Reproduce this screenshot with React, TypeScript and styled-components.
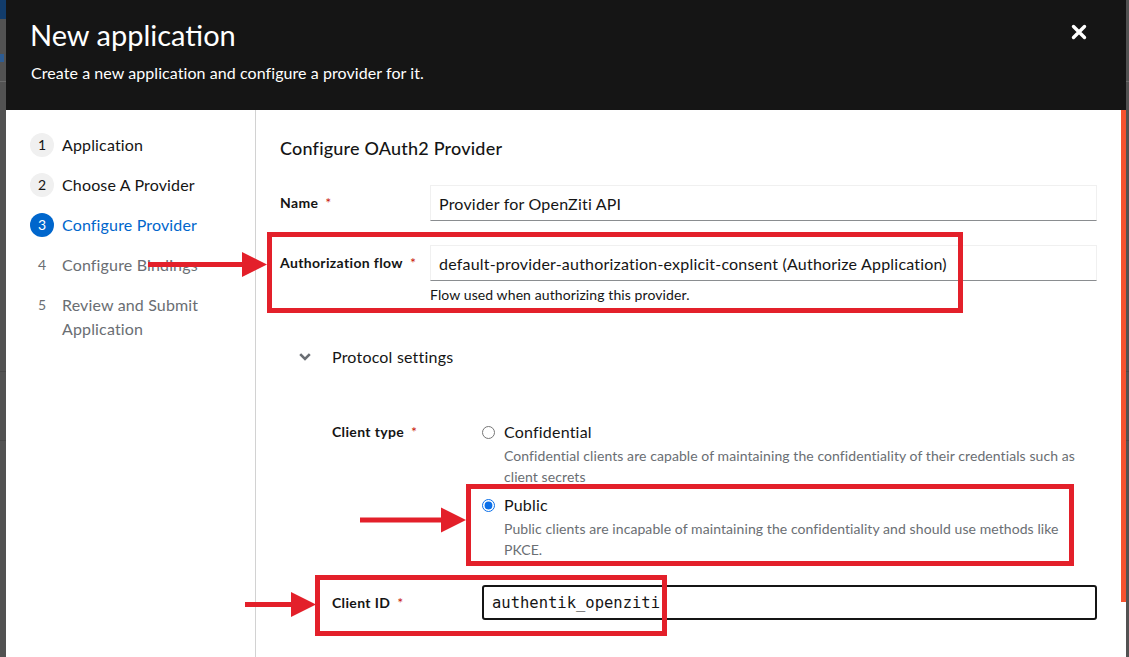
import React from "react";
import styled, { createGlobalStyle } from "styled-components";

const GlobalStyle = createGlobalStyle`
  html, body { margin: 0; padding: 0; overflow: hidden; background: #525252; }
  body { font-family: Lato, "Liberation Sans", sans-serif; color: #151515; }
  * { box-sizing: border-box; }
`;

const RED = "#e3202a";

const Page = styled.div`
  position: relative;
  width: 1129px;
  height: 657px;
  display: flex;
  overflow: hidden;
  background-color: #525252;
  background-image: linear-gradient(#6a6a6a, #6a6a6a), linear-gradient(#484848, #484848),
    linear-gradient(#484848, #484848);
  background-size: 100% 1px;
  background-position: 0 81px, 0 371px, 0 440px;
  background-repeat: no-repeat;
`;

const PeekLeft = styled.div`
  width: 6px;
  flex: none;
  display: flex;
  flex-direction: column;
`;

const PeekBanner = styled.div`
  height: 19px;
  background: #123c6b;
`;

const PeekMark = styled.div`
  margin-top: 35px;
  width: 4px;
  height: 8px;
  background: #2d5c93;
`;

const Modal = styled.div`
  position: relative;
  width: 1120px;
  flex: none;
  height: 100%;
  background: #ffffff;
  display: flex;
  flex-direction: column;
`;

const Header = styled.header`
  height: 110px;
  flex: none;
  background: #151515;
  padding: 17px 25px 0 25px;
  display: flex;
  justify-content: space-between;
  align-items: flex-start;
`;

const HeaderText = styled.div`
  display: flex;
  flex-direction: column;
  gap: 8px;
`;

const Title = styled.h1`
  margin: 0 0 0 -1px;
  font-size: 29px;
  line-height: 36px;
  font-weight: 400;
  color: #ffffff;
`;

const Subtitle = styled.p`
  margin: 0;
  font-size: 16px;
  line-height: 24px;
  letter-spacing: 0.07px;
  color: #ffffff;
`;

const CloseButton = styled.button`
  width: 44px;
  height: 44px;
  margin-top: -7px;
  border: none;
  background: transparent;
  padding: 0;
  display: flex;
  align-items: center;
  justify-content: center;
  cursor: pointer;
`;

const Body = styled.div`
  flex: 1;
  min-height: 0;
  display: flex;
`;

const Nav = styled.nav`
  width: 250px;
  flex: none;
  border-right: 1px solid #d2d2d2;
  padding: 23px 16px 0 24px;
`;

const NavList = styled.ol`
  list-style: none;
  margin: 0;
  padding: 0;
  display: flex;
  flex-direction: column;
  gap: 16px;
`;

type StepState = "done" | "current" | "todo";

const NavItem = styled.li<{ $state: StepState }>`
  display: flex;
  align-items: flex-start;
  gap: 8px;
  font-size: 16px;
  line-height: 24px;
  letter-spacing: 0.15px;
  color: ${(p) => (p.$state === "current" ? "#0066cc" : p.$state === "todo" ? "#6a6e73" : "#151515")};
`;

const StepNum = styled.span<{ $state: StepState }>`
  width: 24px;
  height: 24px;
  flex: none;
  border-radius: 50%;
  display: flex;
  align-items: center;
  justify-content: center;
  font-size: 14px;
  letter-spacing: 0;
  background: ${(p) => (p.$state === "current" ? "#0066cc" : p.$state === "done" ? "#f0f0f0" : "transparent")};
  color: ${(p) => (p.$state === "current" ? "#ffffff" : p.$state === "todo" ? "#6a6e73" : "#151515")};
`;

const Main = styled.main`
  flex: 1;
  min-width: 0;
  padding: 24px 29px 0 24px;
`;

const Heading = styled.h2`
  margin: 0 0 23px;
  font-size: 18px;
  line-height: 28px;
  font-weight: 500;
  letter-spacing: 0.2px;
`;

const Rows = styled.div`
  display: flex;
  flex-direction: column;
  gap: 24px;
`;

const FormRow = styled.div`
  display: grid;
  grid-template-columns: 150px 1fr;
  align-items: start;
`;

const Label = styled.label<{ $lh: number }>`
  font-size: 14px;
  font-weight: 700;
  letter-spacing: 0.35px;
  line-height: ${(p) => p.$lh}px;
  white-space: nowrap;
`;

const Req = styled.span`
  color: #c9190b;
  margin-left: 7px;
  font-weight: 400;
`;

const FieldCol = styled.div`
  display: flex;
  flex-direction: column;
`;

const TextField = styled.div<{ $focused?: boolean }>`
  display: flex;
  align-items: center;
  white-space: nowrap;
  overflow: hidden;
  color: #151515;
  ${(p) =>
    p.$focused
      ? `
    height: 35px;
    border: 2px solid #151515;
    border-radius: 3px;
    padding: 0 8px;
    font-family: "DejaVu Sans Mono", "Liberation Mono", monospace;
    font-size: 15.5px;
  `
      : `
    height: 36px;
    border: 1px solid #f0f0f0;
    border-bottom-color: #8a8d90;
    padding: 0 8px;
    font-size: 16px;
    letter-spacing: 0.2px;
  `}
`;

const Caret = styled.span`
  display: inline-block;
  width: 1px;
  height: 21px;
  margin-left: 2px;
  background: #151515;
`;

const Helper = styled.div`
  margin-top: 4px;
  font-size: 14px;
  line-height: 20px;
  letter-spacing: 0.1px;
`;

const Toggle = styled.button`
  margin-top: 32px;
  height: 40px;
  border: none;
  background: transparent;
  padding: 0 0 0 15px;
  display: flex;
  align-items: center;
  font-family: inherit;
  font-size: 16px;
  letter-spacing: 0.2px;
  color: #151515;
  cursor: pointer;
`;

const ToggleIcon = styled.span`
  width: 20px;
  display: flex;
  justify-content: center;
  align-items: center;
`;

const ToggleText = styled.span`
  margin-left: 17px;
  line-height: 24px;
`;

const Expanded = styled.div`
  margin-top: 43px;
  padding-left: 52px;
  display: flex;
  flex-direction: column;
  gap: 25px;
`;

const RadioGroup = styled.div`
  display: flex;
  flex-direction: column;
  gap: 6px;
`;

const RadioOption = styled.label`
  display: grid;
  grid-template-columns: 13px 1fr;
  column-gap: 9px;
  align-items: center;
`;

const Radio = styled.input`
  margin: 0;
  width: 13px;
  height: 13px;
  accent-color: #0b6fe8;
`;

const RadioLabel = styled.span`
  font-size: 16px;
  line-height: 24px;
  letter-spacing: 0.2px;
`;

const RadioDesc = styled.span`
  grid-column: 2;
  margin-top: 1px;
  padding-right: 12px;
  font-size: 14px;
  line-height: 21px;
  letter-spacing: 0.08px;
  color: #6a6e73;
`;

const Thumb = styled.div`
  position: absolute;
  right: 0;
  top: 110px;
  width: 5px;
  height: 492px;
  background: #f5512f;
`;

const PeekRight = styled.div`
  flex: 1;
`;

const AnnotationBox = styled.div<{ $x: number; $y: number; $w: number; $h: number }>`
  position: absolute;
  left: ${(p) => p.$x}px;
  top: ${(p) => p.$y}px;
  width: ${(p) => p.$w}px;
  height: ${(p) => p.$h}px;
  border: 5px solid ${RED};
  pointer-events: none;
`;

const ArrowLayer = styled.svg`
  position: absolute;
  left: 0;
  top: 0;
  width: 1129px;
  height: 657px;
  pointer-events: none;
`;

const Arrow = ({ x1, x2, y }: { x1: number; x2: number; y: number }) => (
  <g fill={RED}>
    <rect x={x1} y={y - 2.5} width={x2 - x1 - 22} height={5} />
    <polygon points={`${x2 - 25},${y - 12.5} ${x2},${y} ${x2 - 25},${y + 12.5}`} />
  </g>
);

const steps: { n: number; label: string; state: StepState }[] = [
  { n: 1, label: "Application", state: "done" },
  { n: 2, label: "Choose A Provider", state: "done" },
  { n: 3, label: "Configure Provider", state: "current" },
  { n: 4, label: "Configure Bindings", state: "todo" },
  { n: 5, label: "Review and Submit Application", state: "todo" },
];

export default function App() {
  return (
    <>
      <GlobalStyle />
      <Page>
        <PeekLeft>
          <PeekBanner />
          <PeekMark />
        </PeekLeft>
        <Modal>
          <Header>
            <HeaderText>
              <Title>New application</Title>
              <Subtitle>Create a new application and configure a provider for it.</Subtitle>
            </HeaderText>
            <CloseButton aria-label="Close">
              <svg width="16" height="16" viewBox="0 0 16 16">
                <path d="M2.5 2.5 L13.5 13.5 M13.5 2.5 L2.5 13.5" stroke="#fff" strokeWidth="3.4" strokeLinecap="round" />
              </svg>
            </CloseButton>
          </Header>
          <Body>
            <Nav>
              <NavList>
                {steps.map((s) => (
                  <NavItem key={s.n} $state={s.state}>
                    <StepNum $state={s.state}>{s.n}</StepNum>
                    <span>{s.label}</span>
                  </NavItem>
                ))}
              </NavList>
            </Nav>
            <Main>
              <Heading>Configure OAuth2 Provider</Heading>
              <Rows>
                <FormRow>
                  <Label $lh={36}>
                    Name<Req>*</Req>
                  </Label>
                  <TextField>Provider for OpenZiti API</TextField>
                </FormRow>
                <FormRow>
                  <Label $lh={36}>
                    Authorization flow<Req>*</Req>
                  </Label>
                  <FieldCol>
                    <TextField>default-provider-authorization-explicit-consent (Authorize Application)</TextField>
                    <Helper>Flow used when authorizing this provider.</Helper>
                  </FieldCol>
                </FormRow>
              </Rows>
              <Toggle>
                <ToggleIcon>
                  <svg width="12" height="8" viewBox="0 0 12 8">
                    <path d="M1.2 1.2 L6 6 L10.8 1.2" stroke="#6a6e73" strokeWidth="2.6" fill="none" />
                  </svg>
                </ToggleIcon>
                <ToggleText>Protocol settings</ToggleText>
              </Toggle>
              <Expanded>
                <FormRow>
                  <Label $lh={24}>
                    Client type<Req>*</Req>
                  </Label>
                  <RadioGroup>
                    <RadioOption>
                      <Radio type="radio" name="ctype" readOnly checked={false} />
                      <RadioLabel>Confidential</RadioLabel>
                      <RadioDesc>
                        Confidential clients are capable of maintaining the confidentiality of their credentials such as
                        client secrets
                      </RadioDesc>
                    </RadioOption>
                    <RadioOption>
                      <Radio type="radio" name="ctype" readOnly checked />
                      <RadioLabel>Public</RadioLabel>
                      <RadioDesc>
                        Public clients are incapable of maintaining the confidentiality and should use methods like PKCE.
                      </RadioDesc>
                    </RadioOption>
                  </RadioGroup>
                </FormRow>
                <FormRow>
                  <Label $lh={35}>
                    Client ID<Req>*</Req>
                  </Label>
                  <TextField $focused>
                    authentik_openziti
                    <Caret />
                  </TextField>
                </FormRow>
              </Expanded>
            </Main>
          </Body>
          <Thumb />
        </Modal>
        <PeekRight />
        <AnnotationBox $x={267} $y={232} $w={696} $h={81} />
        <AnnotationBox $x={466} $y={484} $w={608} $h={82} />
        <AnnotationBox $x={315} $y={575} $w={352} $h={61} />
        <ArrowLayer viewBox="0 0 1129 657">
          <Arrow x1={148} x2={267} y={264.5} />
          <Arrow x1={360} x2={466} y={520} />
          <Arrow x1={245} x2={316} y={604.5} />
        </ArrowLayer>
      </Page>
    </>
  );
}
